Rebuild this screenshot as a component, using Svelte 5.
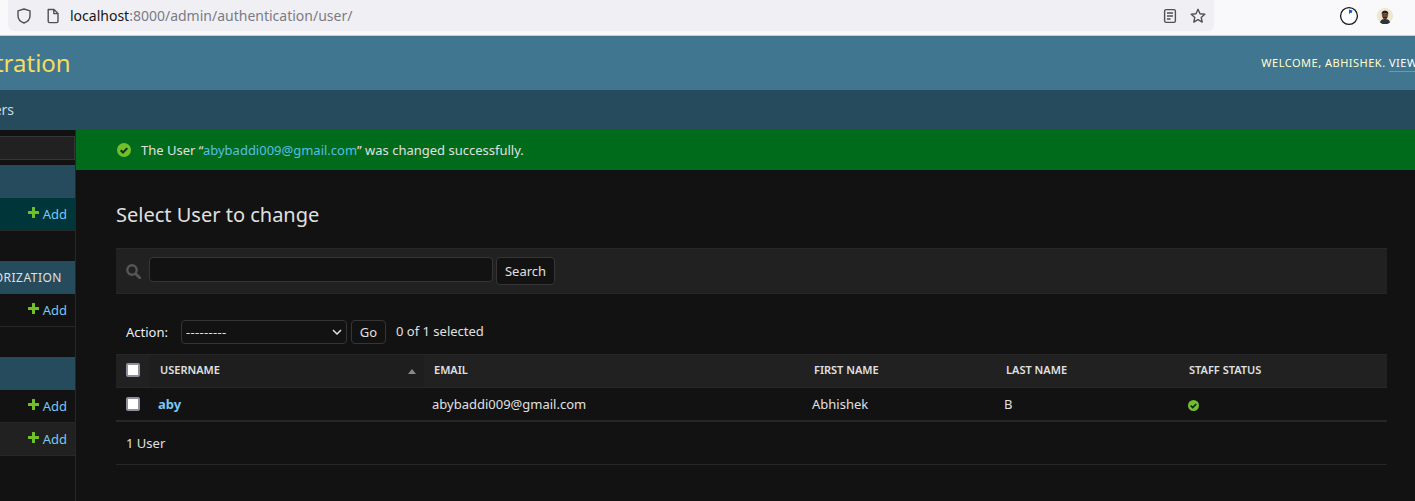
<script>
	const rows = [{ username: 'aby', email: 'abybaddi009@gmail.com', first: 'Abhishek', last: 'B' }];
	const columns = ['First name', 'Last name', 'Staff status'];
</script>

{#snippet addLink()}
	<a href="#add" class="add">
		<svg class="plus" viewBox="0 0 11 11" width="11" height="11"><path d="M4 .5Q4 0 4.500 0h2Q7 0 7 .5V4h3.500q.5 0 .5.500v2q0 .5-.5.5H7v3.500q0 .5-.5.5h-2Q4 11 4 10.500V7H.5Q0 7 0 6.500v-2Q0 4 .5 4H4z" fill="#70bf2b" /></svg>
		Add
	</a>
{/snippet}

<div class="page">
	<div class="chrome">
		<div class="urlbar">
			<svg class="ic shield" viewBox="0 0 16 16" width="16" height="16"><path d="M8 1 2 2.800v5.200c0 3.400 2.400 5.700 6 7 3.600-1.300 6-3.600 6-7V2.800z" fill="none" stroke="#4f4f59" stroke-width="1.400" stroke-linejoin="round" /></svg>
			<svg class="ic page-ic" viewBox="0 0 16 16" width="16" height="16"><path d="M3.200 1.500h5.800L13 5.400v7.800a1.400 1.400 0 0 1-1.400 1.400H4.600a1.400 1.400 0 0 1-1.400-1.400zM8.800 1.700V5.600H12.800" fill="none" stroke="#4f4f59" stroke-width="1.400" stroke-linejoin="round" /></svg>
			<span class="url"><b>localhost</b>:8000/admin/authentication/user/</span>
			<svg class="ic reader" viewBox="0 0 16 16" width="16" height="16"><rect x="2.600" y="1.600" width="10.800" height="12.800" rx="1.600" fill="none" stroke="#4f4f59" stroke-width="1.400" /><path d="M5 5h6M5 8h6M5 11h3.500" stroke="#4f4f59" stroke-width="1.400" /></svg>
			<svg class="ic star" viewBox="0 0 16 16" width="16" height="16"><path d="M8 1.300l2 4.400 4.800.5-3.600 3.200 1 4.700L8 11.700l-4.200 2.400 1-4.700L1.200 6.200l4.800-.5z" fill="none" stroke="#4f4f59" stroke-width="1.400" stroke-linejoin="round" /></svg>
		</div>
		<div class="tray">
			<svg viewBox="0 0 20 20" width="20" height="20"><circle cx="10" cy="10" r="8.400" fill="#fff" stroke="#15141a" stroke-width="1.300" /><path d="M10 3.400l3.500 1-.7 2.600-1.600-.2L10 8.500z" fill="#0a62d9" /></svg>
			<svg class="avatar" viewBox="0 0 16 16" width="16" height="16"><circle cx="8" cy="8" r="8" fill="#ece8cf" /><ellipse cx="8" cy="6.800" rx="3.200" ry="4" fill="#7d5340" /><path d="M4.600 6C4.600 1.800 11.400 1.800 11.400 6 9.500 4.400 6.500 4.400 4.600 6z" fill="#1f1a18" /><path d="M5.800 6.800h1.600M8.600 6.800h1.600" stroke="#1f1a18" stroke-width=".8" /><path d="M6 8.800h4v1.800H6z" fill="#2e2320" /><path d="M3 14.500c.6-3 3-3.500 5-3.500s4.400.5 5 3.500a8 8 0 0 1-10 0z" fill="#2f343c" /></svg>
		</div>
	</div>

	<header class="site-header">
		<div class="branding">Django administration</div>
		<div class="tools">WELCOME, <span>ABHISHEK</span>. <a href="#view">VIEW SITE</a></div>
	</header>
	<div class="crumbs">Home › Authentication and Authorization › Users</div>

	<div class="main">
		<aside class="sidebar">
			<div class="filter"></div>
			<section class="app">
				<div class="caption"></div>
				<div class="model current">{@render addLink()}</div>
			</section>
			<section class="app">
				<div class="caption">AUTHENTICATION AND AUTHORIZATION</div>
				<div class="model">{@render addLink()}</div>
			</section>
			<section class="app">
				<div class="caption"></div>
				<div class="model">{@render addLink()}</div>
				<div class="model striped">{@render addLink()}</div>
			</section>
		</aside>

		<main class="content-wrap">
			<div class="message">
				<svg viewBox="0 0 14 14" width="14" height="14"><circle cx="7" cy="7" r="7" fill="#70bf2b" /><path d="M3.700 7.200l2.300 2.300 4.300-4.400" fill="none" stroke="#14321a" stroke-width="2" /></svg>
				<span>The User “<a href="#user">abybaddi009@gmail.com</a>” was changed successfully.</span>
			</div>

			<div class="content">
				<h1>Select User to change</h1>

				<div class="toolbar">
					<svg viewBox="0 0 14 14" width="15" height="15"><circle cx="5.600" cy="5.600" r="4.400" fill="none" stroke="#555" stroke-width="2.200" /><path d="M9 9l4 4" stroke="#555" stroke-width="2.600" stroke-linecap="round" /></svg>
					<input class="search" type="text" />
					<button class="btn search-btn">Search</button>
				</div>

				<div class="actions">
					<span class="action-label">Action:</span>
					<div class="select-wrap">
						<select><option>---------</option></select>
						<svg viewBox="0 0 10 6" width="10" height="6"><path d="M1 1l4 4 4-4" fill="none" stroke="#e0e0e0" stroke-width="1.500" /></svg>
					</div>
					<button class="btn go">Go</button>
					<span class="counter">0 of 1 selected</span>
				</div>

				<table>
					<colgroup>
						<col class="c-check" /><col class="c-user" /><col class="c-email" /><col class="c-first" /><col class="c-last" /><col />
					</colgroup>
					<thead>
						<tr>
							<th class="check"><input type="checkbox" /></th>
							<th class="sorted">USERNAME<span class="arrow"></span></th>
							<th>EMAIL</th>
							{#each columns as col}
								<th>{col.toUpperCase()}</th>
							{/each}
						</tr>
					</thead>
					<tbody>
						{#each rows as row}
							<tr>
								<td class="check"><input type="checkbox" /></td>
								<td class="name"><a href="#aby">{row.username}</a></td>
								<td>{row.email}</td>
								<td>{row.first}</td>
								<td>{row.last}</td>
								<td>
									<svg class="yes" viewBox="0 0 14 14" width="11" height="11"><circle cx="7" cy="7" r="7" fill="#70bf2b" /><path d="M3.500 7.200l2.500 2.500 4.500-4.600" fill="none" stroke="#14231a" stroke-width="2.200" /></svg>
								</td>
							</tr>
						{/each}
					</tbody>
				</table>
				<p class="paginator">1 User</p>
			</div>
		</main>
	</div>
</div>

<style>
	:global(body) {
		background: #121212;
		font-family: 'Noto Sans', sans-serif;
		overflow: hidden;
	}
	.page {
		height: 501px;
		overflow: hidden;
		font-size: 13px;
		color: #eeeeee;
	}

	/* browser bar */
	.chrome {
		height: 35px;
		background: #f9f9fb;
		border-bottom: 1px solid #ccc;
		display: flex;
	}
	.urlbar {
		width: 1206px;
		margin-left: 8px;
		height: 31px;
		background: #f0f0f4;
		border-radius: 0 0 6px 6px;
		display: flex;
		align-items: center;
		color: #7b7b84;
		font-size: 14px;
	}
	.shield {
		margin-left: 8px;
	}
	.page-ic {
		margin-left: 13px;
	}
	.url {
		margin-left: 9px;
		flex: 1;
	}
	.url b {
		font-weight: 400;
		color: #15141a;
	}
	.star {
		margin: 0 8px 0 12px;
	}
	.tray {
		flex: 1;
		display: flex;
		align-items: center;
		height: 31px;
		padding-left: 125px;
		gap: 18px;
	}

	/* admin header */
	.site-header {
		height: 54px;
		padding-bottom: 2px;
		box-sizing: border-box;
		background: #417690;
		display: flex;
		align-items: center;
		justify-content: space-between;
		white-space: nowrap;
	}
	.branding {
		margin-left: -182px;
		font-size: 24px;
		font-weight: 400;
		color: #f5dd5d;
	}
	.tools {
		margin-right: -30px;
		font-size: 11px;
		letter-spacing: 0.5px;
		color: #ffc;
	}
	.tools a {
		color: #fff;
		text-decoration: none;
		border-bottom: 1px solid rgba(255, 255, 255, 0.25);
		padding-bottom: 1px;
	}
	.crumbs {
		height: 40px;
		line-height: 40px;
		background: #264b5d;
		color: #c4dce8;
		font-size: 14px;
		white-space: nowrap;
		margin-left: -305px;
	}

	.main {
		display: flex;
	}

	/* sidebar is scrolled off to the left */
	.sidebar {
		width: 75px;
		flex: none;
		border-right: 1px solid #272727;
		height: 371px;
		overflow: hidden;
	}
	.filter {
		height: 24px;
		margin: 6px 0 0 -10px;
		background: #212121;
		border: 1px solid #353535;
		box-sizing: border-box;
	}
	.app {
		margin-top: 5px;
		margin-bottom: 30px;
	}
	.app:last-child {
		margin-bottom: 0;
	}
	.caption {
		height: 33px;
		line-height: 33px;
		background: #264b5d;
		color: #e0e0e0;
		font-size: 12px;
		letter-spacing: 0.5px;
		white-space: nowrap;
		padding-right: 13px;
		display: flex;
		justify-content: flex-end;
	}
	.model {
		height: 32px;
		border-bottom: 1px solid #272727;
		display: flex;
		align-items: center;
		justify-content: flex-end;
		padding-right: 8px;
	}
	.model.current {
		background: #00363a;
	}
	.model.striped {
		background: #212121;
	}
	.add {
		display: flex;
		align-items: center;
		gap: 4px;
		color: #78c8f5;
		text-decoration: none;
		font-size: 13px;
	}
	.plus {
		margin-top: -4px;
	}

	.content-wrap {
		flex: 1;
		min-width: 0;
	}
	.message {
		height: 40px;
		background: #006b1b;
		display: flex;
		align-items: center;
		gap: 10px;
		padding-left: 41px;
		color: #e0e0e0;
		font-size: 13px;
	}
	.message a {
		color: #5bbde4;
		text-decoration: none;
	}
	.content {
		padding: 31px 28px 0 40px;
	}
	h1 {
		margin: 0;
		font-size: 20px;
		line-height: 28px;
		font-weight: 400;
		color: #e0e0e0;
	}
	.toolbar {
		margin-top: 19px;
		height: 46px;
		background: #212121;
		border-top: 1px solid #272727;
		border-bottom: 1px solid #272727;
		box-sizing: border-box;
		display: flex;
		align-items: center;
		padding-left: 10px;
		gap: 3px;
	}
	.toolbar svg {
		margin-right: 5px;
	}
	.search {
		width: 344px;
		height: 25px;
		box-sizing: border-box;
		background: #121212;
		border: 1px solid #353535;
		border-radius: 4px;
		margin: 0 0 3px;
	}
	.btn {
		background: #121212;
		color: #e0e0e0;
		border: 1px solid #353535;
		border-radius: 4px;
		font: inherit;
		font-size: 13px;
		padding: 0;
		height: 28px;
		cursor: pointer;
	}
	.search-btn {
		width: 59px;
	}
	.actions {
		margin-top: 26px;
		height: 24px;
		display: flex;
		align-items: center;
		padding-left: 10px;
	}
	.action-label {
		width: 55px;
	}
	.select-wrap {
		position: relative;
		display: flex;
	}
	.select-wrap select {
		appearance: none;
		width: 166px;
		height: 24px;
		box-sizing: border-box;
		background: #121212;
		color: #e0e0e0;
		border: 1px solid #353535;
		border-radius: 4px;
		font: inherit;
		font-size: 13px;
		letter-spacing: 0.3px;
		padding: 0 0 0 4px;
	}
	.select-wrap svg {
		position: absolute;
		right: 5px;
		top: 9px;
	}
	.go {
		margin-left: 4px;
		width: 35px;
		height: 24px;
	}
	.counter {
		margin-left: 10px;
		margin-top: -2px;
		color: #e0e0e0;
	}

	table {
		margin-top: 10px;
		width: 100%;
		border-collapse: collapse;
		table-layout: fixed;
	}
	.c-check {
		width: 34px;
	}
	.c-user {
		width: 274px;
	}
	.c-email {
		width: 380px;
	}
	.c-first {
		width: 192px;
	}
	.c-last {
		width: 183px;
	}
	thead tr {
		height: 33px;
		background: #212121;
		border-top: 1px solid #272727;
		border-bottom: 1px solid #272727;
	}
	th {
		text-align: left;
		font-size: 11px;
		font-weight: 600;
		padding: 0 10px 3px;
		color: #e0e0e0;
		position: relative;
	}
	th.sorted {
		background: #1e1e1e;
	}
	.arrow {
		position: absolute;
		right: 8px;
		top: 14px;
		border-left: 4.500px solid transparent;
		border-right: 4.500px solid transparent;
		border-bottom: 5px solid #8a8a8a;
	}
	tbody tr {
		height: 33px;
		border-bottom: 2px solid #272727;
	}
	td {
		padding: 0 8px;
		font-size: 13px;
		color: #e0e0e0;
	}
	.check {
		padding: 0 0 0 10px;
	}
	th.check {
		padding-bottom: 3px;
	}
	.check input {
		appearance: none;
		display: block;
		margin: 0;
		width: 14px;
		height: 14px;
		box-sizing: border-box;
		background: #fff;
		border: 2px solid #8f8f9d;
		border-radius: 2px;
	}
	.name a {
		color: #78c8f5;
		font-weight: 700;
		text-decoration: none;
	}
	.yes {
		display: block;
		margin-top: 3px;
		margin-left: 1px;
	}
	.paginator {
		margin: 0;
		height: 42px;
		line-height: 42px;
		padding-left: 10px;
		border-bottom: 1px solid #272727;
		color: #e0e0e0;
	}
</style>
